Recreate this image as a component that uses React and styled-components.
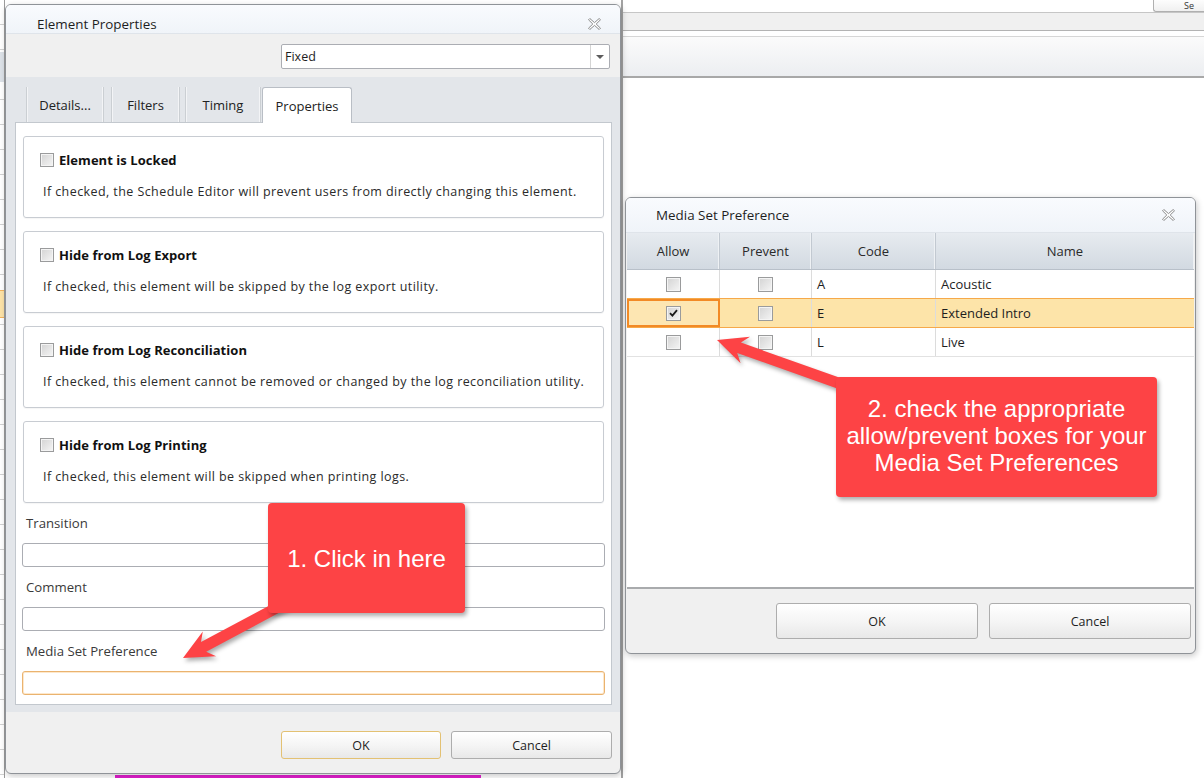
import React from 'react'
import styled, { createGlobalStyle } from 'styled-components'

const uiFont = `"Open Sans", "Noto Sans", "DejaVu Sans", sans-serif`
const calloutRed = '#fd4345'

const GlobalStyle = createGlobalStyle`
  html, body {
    margin: 0;
    padding: 0;
    background: #fff;
  }
  * {
    box-sizing: border-box;
  }
`

const Desktop = styled.div`
  position: relative;
  width: 1204px;
  height: 778px;
  overflow: hidden;
  background: #fff;
  font-family: ${uiFont};
  color: #1e1e1e;
`

/* ---- application behind the dialogs ---- */

const BackApp = styled.div`
  display: flex;
  height: 100%;
`

const Rail = styled.div`
  width: 5px;
  display: flex;
  flex-direction: column;
  border-right: 1px solid #9c9c9c;
  background: repeating-linear-gradient(to bottom, #fff 0 24px, #d2d2d2 24px 25px);
`

const RailHead = styled.div`
  margin-top: 52px;
  height: 30px;
  background: #dde2e8;
`

const RailGap = styled.div`
  height: ${p => p.$h}px;
`

const RailSelected = styled.div`
  height: 28px;
  background: #fde3a7;
  border-top: 1px solid #f4b35d;
  border-bottom: 1px solid #f4b35d;
`

const Under = styled.div`
  width: 616px;
  display: flex;
  flex-direction: column;
  justify-content: flex-end;
`

const MagentaBar = styled.div`
  margin-left: 110px;
  width: 366px;
  height: 3px;
  background: #e21fcf;
`

const BackMain = styled.div`
  flex: 1;
  display: flex;
  flex-direction: column;
  border-left: 2px solid #a3a3a3;
`

const TopStrip = styled.div`
  height: 12px;
  display: flex;
  justify-content: flex-end;
`

const CornerButton = styled.div`
  width: 51px;
  height: 12px;
  border-left: 1px solid #b0b0b0;
  border-bottom: 1px solid #b0b0b0;
  border-bottom-left-radius: 3px;
  background: linear-gradient(#fdfdfd, #f0f0f0);
  padding-left: 30px;
  font-size: 9px;
  line-height: 11px;
  color: #333;
`

const MenuStrip = styled.div`
  height: 19px;
  background: #f0f0f0;
  border-top: 1px solid #c6c6c6;
  border-bottom: 1px solid #b3b3b3;
`

const WhiteGap = styled.div`
  height: 5px;
`

const Ribbon = styled.div`
  height: 42px;
  border-top: 1px solid #d6d6d6;
  border-bottom: 2px solid #a8a8a8;
  background: linear-gradient(#fbfbfb, #eceef1);
`

/* ---- dialog chrome ---- */

const Window = styled.div`
  position: absolute;
  left: ${p => p.$x}px;
  top: ${p => p.$y}px;
  width: ${p => p.$w}px;
  display: flex;
  flex-direction: column;
  background: #f0f0f0;
  border: 1px solid #8f9398;
  border-radius: 6px;
  box-shadow: 1px 2px 6px rgba(0, 0, 0, 0.22);
  overflow: hidden;
`

const TitleBar = styled.div`
  height: ${p => p.$h}px;
  padding: ${p => p.$pt}px ${p => p.$pr}px 0 ${p => p.$pl}px;
  display: flex;
  align-items: center;
  justify-content: space-between;
  background: linear-gradient(#f9fbfe, #f0f4f9);
  border-bottom: 1px solid #dfe4ea;
  font-size: 13.4px;
  color: #1e1e1e;
`

const CloseGlyph = () => (
  <svg width="13" height="12" viewBox="0 0 13 12">
    <path
      d="M0.5 1.8 L1.8 0.5 L6.5 4.6 L11.2 0.5 L12.5 1.8 L8.2 6 L12.5 10.2 L11.2 11.5 L6.5 7.4 L1.8 11.5 L0.5 10.2 L4.8 6 Z"
      fill="#fff"
      stroke="#8a8a8a"
      strokeWidth="1"
      strokeLinejoin="round"
    />
  </svg>
)

const Toolbar = styled.div`
  height: 43px;
  padding: 10px 10px 0 0;
  display: flex;
  justify-content: flex-end;
  align-items: flex-start;
`

const Dropdown = styled.div`
  width: 329px;
  height: 25px;
  display: flex;
  background: #fff;
  border: 1px solid #abadb3;
  border-radius: 2px;
  font-size: 12.5px;
`

const DropdownValue = styled.div`
  flex: 1;
  display: flex;
  align-items: center;
  padding-left: 3px;
`

const DropdownArrow = styled.div`
  width: 19px;
  border-left: 1px solid #d4d4d4;
  display: flex;
  align-items: center;
  justify-content: center;
  &::after {
    content: '';
    border-left: 4px solid transparent;
    border-right: 4px solid transparent;
    border-top: 4px solid #5c5c5c;
  }
`

/* ---- tabs ---- */

const TabArea = styled.div`
  padding: 10px 8px 7px 9px;
  display: flex;
  flex-direction: column;
  background: #e3e6ea;
`

const TabRow = styled.div`
  height: 35px;
  display: flex;
  padding-left: 11px;
  position: relative;
  z-index: 1;
`

const Tab = styled.div`
  width: ${p => p.$w}px;
  margin-right: ${p => p.$gap}px;
  display: flex;
  align-items: center;
  justify-content: center;
  font-size: 13px;
  color: #222;
  border-left: 1px solid #cbcfd3;
  border-right: 1px solid #cbcfd3;
  box-shadow: inset 1px 0 #f3f4f6, inset -1px 0 #f3f4f6;
  ${p => p.$active && `
    height: 36px;
    background: #fff;
    border: 1px solid #b9bec5;
    border-bottom: none;
    border-radius: 3px 3px 0 0;
    box-shadow: none;
  `}
`

const Panel = styled.div`
  background: #fff;
  border: 1px solid #c3c8ce;
  padding: 13px 7px 9px 7px;
  display: flex;
  flex-direction: column;
`

const OptionList = styled.div`
  display: flex;
  flex-direction: column;
  gap: 13px;
`

const OptionBox = styled.div`
  height: 82px;
  border: 1px solid #c8ccd2;
  border-radius: 3px;
  padding: 15px 16px 0 16px;
  box-shadow: 0 1px 1px rgba(0, 0, 0, 0.04);
`

const CheckRow = styled.div`
  height: 16px;
  display: flex;
  align-items: center;
  gap: 5px;
`

const OptionTitle = styled.span`
  font-size: 13px;
  font-weight: 700;
  letter-spacing: 0.05px;
  color: #111;
`

const OptionHint = styled.div`
  margin: 16px 0 0 3px;
  font-size: 12.5px;
  letter-spacing: 0.42px;
  line-height: 16px;
  color: #2a2a2a;
  white-space: nowrap;
`

const Box = styled.span`
  width: ${p => p.$size}px;
  height: ${p => p.$size}px;
  flex-shrink: 0;
  display: inline-flex;
  align-items: center;
  justify-content: center;
  border: 1px solid #9a9b9c;
  background: linear-gradient(135deg, #d3d3d3, #f5f5f5);
  box-shadow: inset 0 0 0 1px #f4f4f4;
`

const CheckBox = ({ size = 14, checked }) => (
  <Box $size={size}>
    {checked && (
      <svg width="9" height="8" viewBox="0 0 9 8">
        <path d="M1 4.2 L3.4 6.6 L8 1.2" fill="none" stroke="#1c1c1c" strokeWidth="1.8" />
      </svg>
    )}
  </Box>
)

const FieldLabel = styled.div`
  margin-top: 12px;
  height: 16px;
  line-height: 16px;
  padding-left: 3px;
  font-size: 13.2px;
  color: #3a3a3a;
`

const TextInput = styled.div`
  margin: 12px -1px 0 -1px;
  height: 24px;
  background: #fff;
  border: 1px solid ${p => (p.$focus ? '#eab36f' : '#abadb3')};
  border-radius: 3px;
  box-shadow: ${p => (p.$focus ? 'inset 0 0 0 1px #fde8cc' : 'none')};
`

/* ---- footers and buttons ---- */

const Footer = styled.div`
  height: ${p => p.$h}px;
  padding: ${p => p.$pt}px ${p => p.$pr}px 0 0;
  display: flex;
  justify-content: flex-end;
  gap: ${p => p.$gap}px;
`

const Button = styled.div`
  width: ${p => p.$w}px;
  height: ${p => p.$h}px;
  display: flex;
  align-items: center;
  justify-content: center;
  border: 1px solid ${p => (p.$default ? '#e3c173' : '#adadad')};
  border-radius: 3px;
  background: linear-gradient(#ffffff, #f4f4f4 55%, #e8e8e8);
  font-size: 12.5px;
  color: #1e1e1e;
`

/* ---- media set grid ---- */

const GridArea = styled.div`
  height: 356px;
  margin: 0 1px;
  background: #fff;
  border-bottom: 2px solid #a9abad;
`

const columns = '93px 92px 124px 1fr'

const HeaderRow = styled.div`
  display: grid;
  grid-template-columns: ${columns};
  height: 37px;
  background: linear-gradient(#e7ebf0, #d2d9e1);
  border-bottom: 1px solid #b8c0c9;
`

const HeaderCell = styled.div`
  display: flex;
  align-items: center;
  justify-content: center;
  font-size: 13px;
  color: #2a2a2a;
  border-right: 1px solid #c2c9d1;
  box-shadow: inset -1px 0 #eef1f4;
  &:last-child {
    border-right: none;
  }
`

const DataRow = styled.div`
  display: grid;
  grid-template-columns: ${columns};
  height: 29px;
  background: ${p => (p.$selected ? '#fde4a9' : '#fff')};
  border-bottom: 1px solid ${p => (p.$selected ? '#f6a94a' : '#e2e2e2')};
  ${p => p.$selected && 'border-top: 1px solid #f6a94a; margin-top: -1px; height: 30px;'}
`

const DataCell = styled.div`
  display: flex;
  align-items: center;
  justify-content: ${p => (p.$center ? 'center' : 'flex-start')};
  padding-left: ${p => (p.$center ? 0 : 5)}px;
  border-right: 1px solid #dcdcdc;
  font-size: 13px;
  color: #1e1e1e;
  ${p => p.$focus && `
    border: 2px solid #f28a26;
    background: #fde6b2;
  `}
  &:last-child {
    border-right: none;
  }
`

/* ---- annotations ---- */

const Callout = styled.div`
  position: absolute;
  left: ${p => p.$x}px;
  top: ${p => p.$y}px;
  width: ${p => p.$w}px;
  height: ${p => p.$h}px;
  padding-bottom: ${p => p.$pb || 0}px;
  display: flex;
  align-items: center;
  justify-content: center;
  text-align: center;
  background: ${calloutRed};
  border-radius: 4px;
  box-shadow: 2px 3px 4px rgba(0, 0, 0, 0.32);
  color: #fff;
  font-family: "Liberation Sans", Arial, sans-serif;
  font-size: 24px;
  line-height: 27px;
`

const ArrowLayer = styled.svg`
  position: absolute;
  left: 0;
  top: 0;
  pointer-events: none;
  filter: drop-shadow(2px 3px 2px rgba(0, 0, 0, 0.33));
`

const arrowPoints = (sx, sy, tx, ty, shaft = 5.5, headLen = 30, headHalf = 14) => {
  const len = Math.hypot(tx - sx, ty - sy)
  const ux = (tx - sx) / len
  const uy = (ty - sy) / len
  const px = -uy
  const py = ux
  const bx = tx - ux * headLen
  const by = ty - uy * headLen
  const jx = tx - ux * headLen * 0.78
  const jy = ty - uy * headLen * 0.78
  return [
    [sx + px * shaft, sy + py * shaft],
    [jx + px * shaft, jy + py * shaft],
    [bx + px * headHalf, by + py * headHalf],
    [tx, ty],
    [bx - px * headHalf, by - py * headHalf],
    [jx - px * shaft, jy - py * shaft],
    [sx - px * shaft, sy - py * shaft],
  ]
    .map(pt => pt.map(v => v.toFixed(1)).join(','))
    .join(' ')
}

const options = [
  ['Element is Locked', 'If checked, the Schedule Editor will prevent users from directly changing this element.'],
  ['Hide from Log Export', 'If checked, this element will be skipped by the log export utility.'],
  ['Hide from Log Reconciliation', 'If checked, this element cannot be removed or changed by the log reconciliation utility.'],
  ['Hide from Log Printing', 'If checked, this element will be skipped when printing logs.'],
]

const tabs = [
  { label: 'Details...', w: 78, gap: 7 },
  { label: 'Filters', w: 69, gap: 5 },
  { label: 'Timing', w: 76, gap: 1 },
  { label: 'Properties', w: 90, gap: 0, active: true },
]

const mediaSets = [
  { code: 'A', name: 'Acoustic' },
  { code: 'E', name: 'Extended Intro', allow: true, selected: true },
  { code: 'L', name: 'Live' },
]

const ElementProperties = () => (
  <Window $x={5} $y={4} $w={616}>
    <TitleBar $h={29} $pt={9} $pl={31} $pr={19}>
      <span>Element Properties</span>
      <CloseGlyph />
    </TitleBar>
    <Toolbar>
      <Dropdown>
        <DropdownValue>Fixed</DropdownValue>
        <DropdownArrow />
      </Dropdown>
    </Toolbar>
    <TabArea>
      <TabRow>
        {tabs.map(t => (
          <Tab key={t.label} $w={t.w} $gap={t.gap} $active={t.active}>
            {t.label}
          </Tab>
        ))}
      </TabRow>
      <Panel>
        <OptionList>
          {options.map(([title, hint]) => (
            <OptionBox key={title}>
              <CheckRow>
                <CheckBox />
                <OptionTitle>{title}</OptionTitle>
              </CheckRow>
              <OptionHint>{hint}</OptionHint>
            </OptionBox>
          ))}
        </OptionList>
        <FieldLabel>Transition</FieldLabel>
        <TextInput />
        <FieldLabel>Comment</FieldLabel>
        <TextInput />
        <FieldLabel>Media Set Preference</FieldLabel>
        <TextInput $focus />
      </Panel>
    </TabArea>
    <Footer $h={61} $pt={19} $pr={8} $gap={10}>
      <Button $w={160} $h={28} $default>OK</Button>
      <Button $w={161} $h={28}>Cancel</Button>
    </Footer>
  </Window>
)

const MediaSetDialog = () => (
  <Window $x={625} $y={197} $w={571}>
    <TitleBar $h={35} $pt={0} $pl={30} $pr={20}>
      <span>Media Set Preference</span>
      <CloseGlyph />
    </TitleBar>
    <GridArea>
      <HeaderRow>
        <HeaderCell>Allow</HeaderCell>
        <HeaderCell>Prevent</HeaderCell>
        <HeaderCell>Code</HeaderCell>
        <HeaderCell>Name</HeaderCell>
      </HeaderRow>
      {mediaSets.map(m => (
        <DataRow key={m.code} $selected={m.selected}>
          <DataCell $center $focus={m.selected}>
            <CheckBox size={15} checked={m.allow} />
          </DataCell>
          <DataCell $center>
            <CheckBox size={15} />
          </DataCell>
          <DataCell>{m.code}</DataCell>
          <DataCell>{m.name}</DataCell>
        </DataRow>
      ))}
    </GridArea>
    <Footer $h={64} $pt={14} $pr={4} $gap={11}>
      <Button $w={202} $h={36}>OK</Button>
      <Button $w={202} $h={36}>Cancel</Button>
    </Footer>
  </Window>
)

const BackgroundApp = () => (
  <BackApp>
    <Rail>
      <RailHead />
      <RailGap $h={208} />
      <RailSelected />
    </Rail>
    <Under>
      <MagentaBar />
    </Under>
    <BackMain>
      <TopStrip>
        <CornerButton>Se</CornerButton>
      </TopStrip>
      <MenuStrip />
      <WhiteGap />
      <Ribbon />
    </BackMain>
  </BackApp>
)

export default function App() {
  return (
    <>
      <GlobalStyle />
      <Desktop>
        <BackgroundApp />
        <ElementProperties />
        <MediaSetDialog />
        <ArrowLayer width="1204" height="778" viewBox="0 0 1204 778">
          <polygon points={arrowPoints(297, 597, 183, 658)} fill={calloutRed} />
          <polygon points={arrowPoints(872, 395, 717, 340)} fill={calloutRed} />
        </ArrowLayer>
        <Callout $x={268} $y={503} $w={197} $h={110}>
          1. Click in here
        </Callout>
        <Callout $x={836} $y={377} $w={321} $h={120} $pb={4}>
          2. check the appropriate
          <br />
          allow/prevent boxes for your
          <br />
          Media Set Preferences
        </Callout>
      </Desktop>
    </>
  )
}
